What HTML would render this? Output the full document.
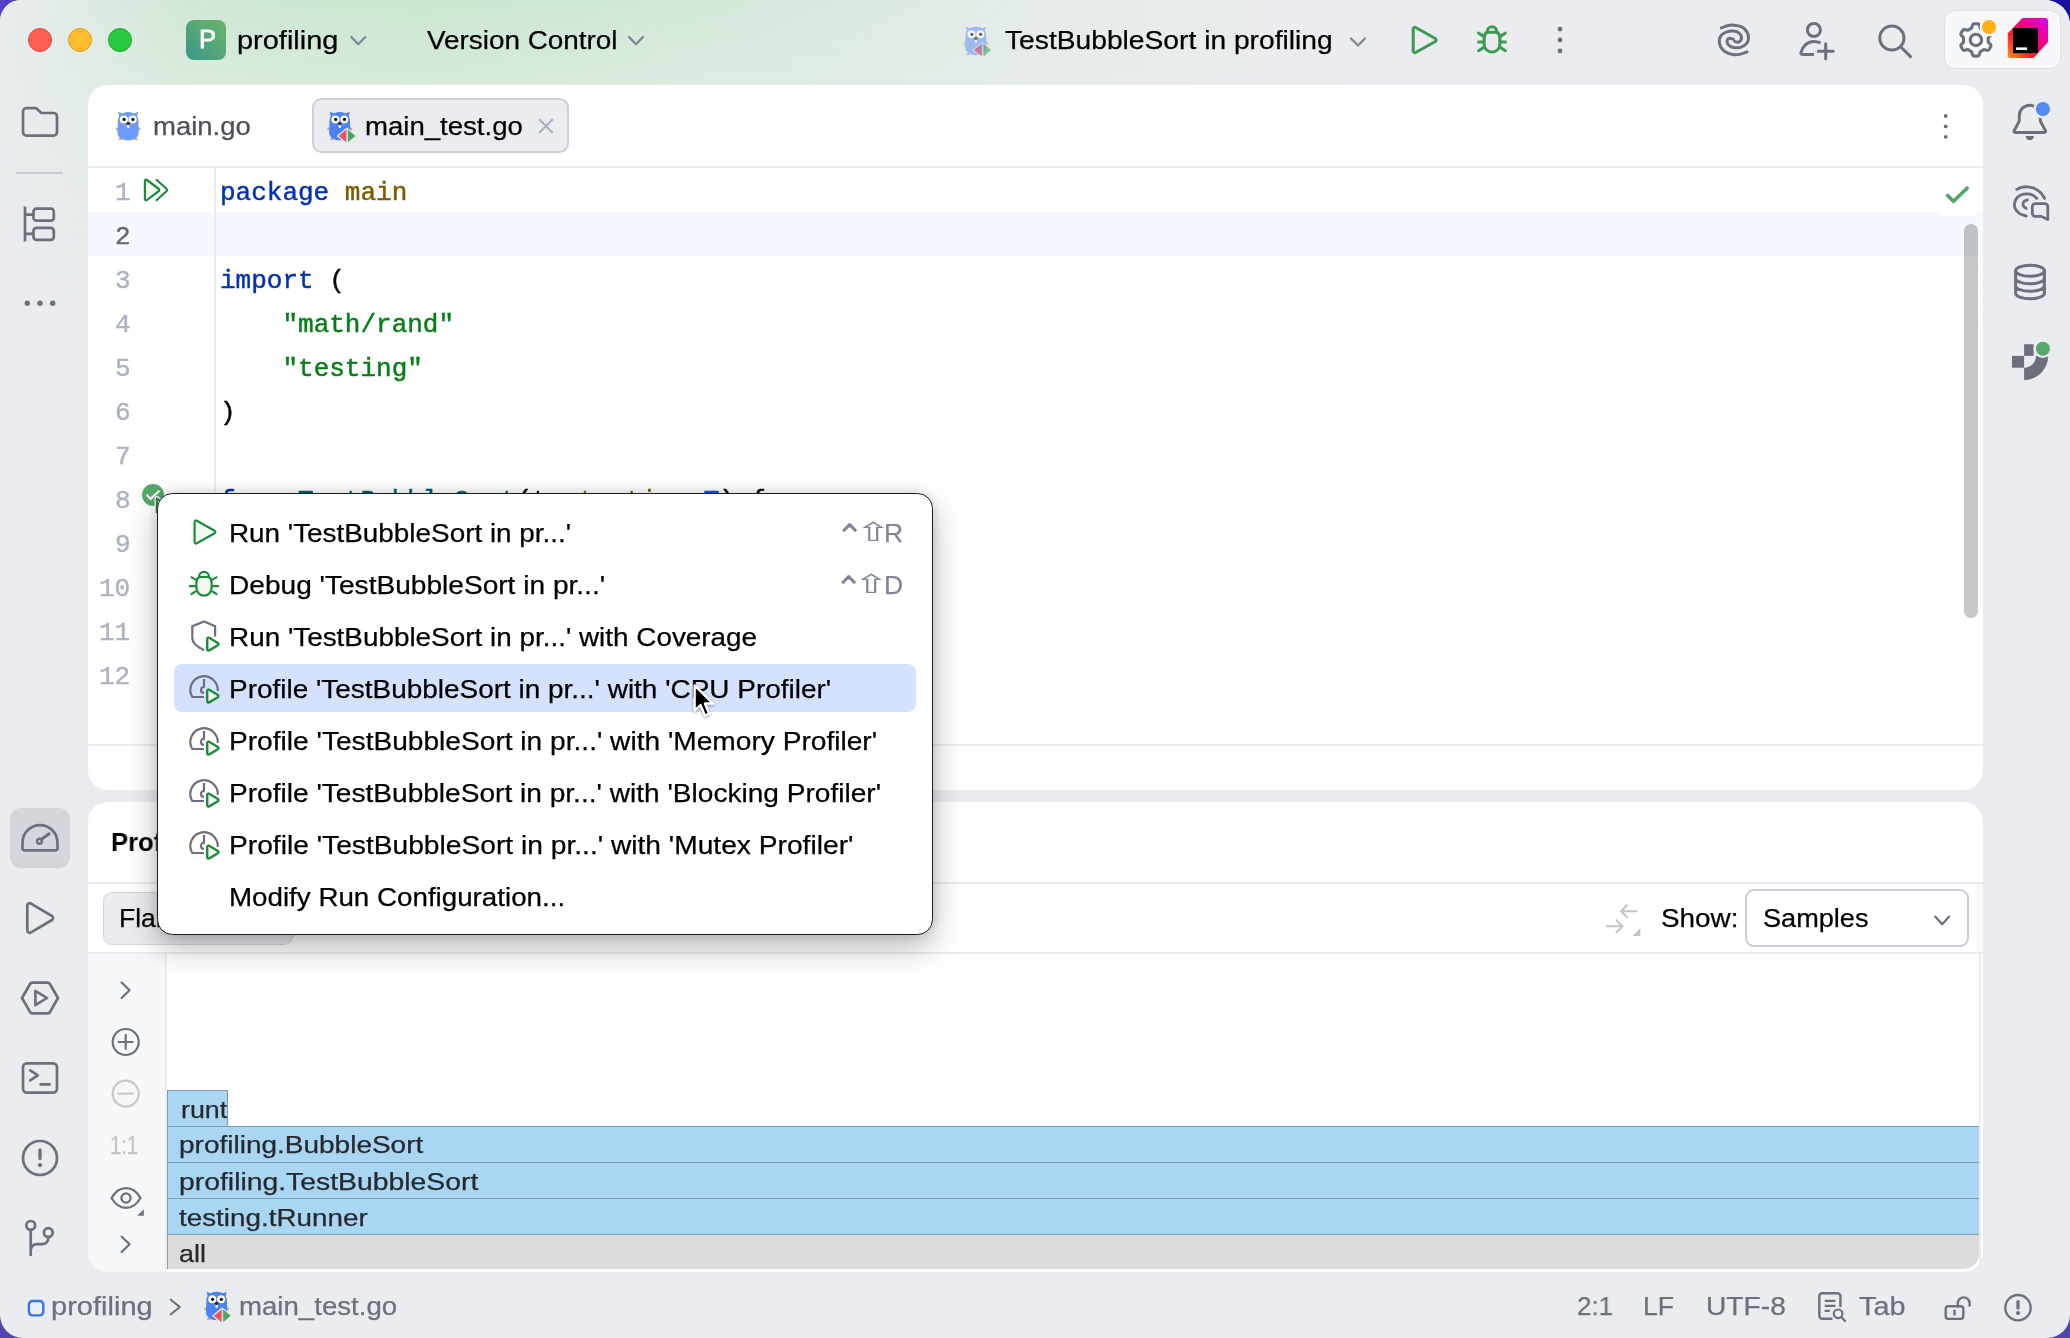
<!DOCTYPE html>
<html lang="en"><head><meta charset="utf-8"><title>profiling – main_test.go</title>
<style>
*{box-sizing:border-box;margin:0;padding:0}
html,body{width:2070px;height:1338px;overflow:hidden}
body{background:#3a2fa8;font-family:"Liberation Sans",sans-serif;position:relative}
#desk{position:absolute;left:0;top:0;width:2070px;height:1338px;
 background:linear-gradient(180deg,rgba(80,70,176,0) 0,rgba(80,70,176,0) 600px,#5046b0 1300px),linear-gradient(90deg,#5145c5 0,#4337b8 60px,#2a20a0 1000px,#180e9c 2070px)}
#win{position:absolute;left:0;top:0;width:2070px;height:1338px;border-radius:21px 25px 23px 23px;background:#ebecf0;overflow:hidden}
#tint{position:absolute;left:0;top:0;width:2070px;height:400px;
 background:linear-gradient(90deg,#e9ecec 0,#e3ece7 60px,#d8ebdc 190px,#d4ead8 420px,#dbece0 720px,#e5ece8 1020px,#eaecee 1250px,#ebecf0 1400px);
 -webkit-mask-image:linear-gradient(180deg,#000 0,#000 70px,rgba(0,0,0,.55) 150px,transparent 330px);mask-image:linear-gradient(180deg,#000 0,#000 70px,rgba(0,0,0,.55) 150px,transparent 330px)}
.abs{position:absolute}
.panel{position:absolute;background:#fff;border-radius:20px;overflow:hidden}
.t{position:absolute;white-space:pre;line-height:1;-webkit-text-stroke:.25px;will-change:transform}
.hl{position:absolute;height:2px;background:#ebecf0}
svg{position:absolute;overflow:visible}
.code{font-family:"Liberation Mono",monospace;font-size:26px;-webkit-text-stroke:.45px}
.kw{color:#0033b3}.str{color:#067d17}.pkg{color:#7a5c00}.fn{color:#00627a}.ty{color:#1750eb}
</style></head>
<body>
<div id="desk"></div>
<div id="win">
<div id="tint"></div>
<div class="abs" style="left:0;top:0;width:1500px;height:70px;background:linear-gradient(180deg,rgba(96,190,120,.075) 0,rgba(96,190,120,.035) 28px,rgba(96,190,120,0) 70px);-webkit-mask-image:linear-gradient(90deg,transparent 40px,#000 260px,#000 600px,transparent 1050px);mask-image:linear-gradient(90deg,transparent 40px,#000 260px,#000 600px,transparent 1050px)"></div>
<div class="abs" style="left:28px;top:28px;width:24px;height:24px;border-radius:50%;background:#ff5f57;border:1px solid #e2463f"></div>
<div class="abs" style="left:68px;top:28px;width:24px;height:24px;border-radius:50%;background:#febc2e;border:1px solid #dea123"></div>
<div class="abs" style="left:108px;top:28px;width:24px;height:24px;border-radius:50%;background:#28c840;border:1px solid #1aab29"></div>
<div class="abs" style="left:186px;top:20px;width:40px;height:40px;border-radius:8px;background:linear-gradient(45deg,#38978a,#6db567)"></div>
<div class="abs" style="left:1944.4px;top:10.4px;width:116.4px;height:58.2px;border-radius:11px;background:#f7f8fa;border:1.3px solid #dfe0e6"></div>
<div class="panel" style="left:87.5px;top:85.2px;width:1895.3px;height:704.8px"></div>
<div class="abs" style="left:87.5px;top:166px;width:1895.3px;height:2px;background:#ebecf0"></div>
<div class="abs" style="left:87.5px;top:212px;width:1895.3px;height:44px;background:#f5f8fe"></div>
<div class="abs" style="left:214.2px;top:168px;width:1.8px;height:576.5px;background:#ebecf0"></div>
<div class="abs" style="left:87.5px;top:744.3px;width:1895.3px;height:1.8px;background:#ebecf0"></div>
<div class="abs" style="left:1935px;top:168px;width:45px;height:47.5px;background:#fff;border-radius:0 0 9px 9px"></div>
<div class="abs" style="left:1964.3px;top:224px;width:13.4px;height:393.7px;background:rgba(0,0,0,.215);border-radius:6.7px"></div>
<div class="abs" style="left:312.2px;top:98.4px;width:257px;height:54.8px;border-radius:9.5px;background:#ebecf0;border:2px solid #cdd0d9"></div>
<div class="panel" style="left:87.5px;top:801.8px;width:1895.3px;height:470.4px"></div>
<div class="abs" style="left:10px;top:808.3px;width:60px;height:59.6px;border-radius:11px;background:#d4d6dc"></div>
<div class="abs" style="left:87.5px;top:881.8px;width:1895.3px;height:1.8px;background:#ebecf0"></div>
<div class="abs" style="left:87.5px;top:952.2px;width:1895.3px;height:2px;background:#ebecf0"></div>
<div class="abs" style="left:1976px;top:883.6px;width:6.8px;height:68.6px;background:#f7f8fa"></div>
<div class="abs" style="left:87.5px;top:954.2px;width:77.5px;height:318px;background:#f7f8fa;border-radius:0 0 0 20px"></div>
<div class="abs" style="left:165px;top:954.2px;width:2px;height:318px;background:#ebecf0"></div>
<div class="abs" style="left:1979.4px;top:954.2px;width:1.2px;height:312px;background:#ebecf0"></div>
<div class="abs" style="left:102.7px;top:892.4px;width:190.6px;height:52.8px;border-radius:9px;background:#ebecf0;border:1.6px solid #d3d5db"></div>
<div class="abs" style="left:1745px;top:888.6px;width:224.4px;height:58.6px;border-radius:9px;background:#fff;border:2px solid #c9ccd6"></div>
<div class="abs" style="left:167.3px;top:1090.3px;width:61px;height:37px;background:#a9d6f2;border:1px solid #7f9db3"></div>
<div class="abs" style="left:167.3px;top:1126.3px;width:1811.9px;height:37px;background:#a9d6f2;border:1px solid #7f9db3;border-right:0"></div>
<div class="abs" style="left:167.3px;top:1162.3px;width:1811.9px;height:37px;background:#a9d6f2;border:1px solid #7f9db3;border-right:0"></div>
<div class="abs" style="left:167.3px;top:1198.3px;width:1811.9px;height:37px;background:#a9d6f2;border:1px solid #7f9db3;border-right:0"></div>
<div class="abs" style="left:167.3px;top:1234.3px;width:1811.9px;height:34.6px;background:#dcdcdc;border-top:1px solid #7f9db3;border-left:1px solid #9a9a9a;border-radius:0 0 15px 0"></div>
<div class="abs" style="left:16px;top:171.8px;width:47.4px;height:1.8px;background:#c9ccd6"></div>
<svg width="2070" height="1338" viewBox="0 0 2070 1338" style="left:0;top:0">
<g transform="translate(40,122)" ><path d="M-17 -10.4a3.4 3.4 0 0 1 3.4-3.4h9a2 2 0 0 1 1.35.52l4.1 3.76a2 2 0 0 0 1.35.52h11.4a3.4 3.4 0 0 1 3.4 3.4v15.8a3.4 3.4 0 0 1-3.4 3.4h-27.2a3.4 3.4 0 0 1-3.4-3.4z" fill="none" stroke="#6c707e" stroke-width="2.7" stroke-linecap="round" stroke-linejoin="round"/></g>
<g transform="translate(40,224)" ><path d="M-15 -17.5v35M-15 -9.3h8.5M-15 9.8h8.5" fill="none" stroke="#6c707e" stroke-width="2.7" stroke-linecap="butt" stroke-linejoin="round"/><rect x="-6.5" y="-15.3" width="20.3" height="12" rx="3" fill="none" stroke="#6c707e" stroke-width="2.7" stroke-linecap="round" stroke-linejoin="round"/><rect x="-6.5" y="3.9" width="20.3" height="12" rx="3" fill="none" stroke="#6c707e" stroke-width="2.7" stroke-linecap="round" stroke-linejoin="round"/></g>
<g transform="translate(40,303.3)" ><circle cx="-12.7" cy="0" r="2.7" fill="#6c707e"/><circle cx="0" cy="0" r="2.7" fill="#6c707e"/><circle cx="12.7" cy="0" r="2.7" fill="#6c707e"/></g>
<g transform="translate(40,838)" ><path d="M-14.900 12.400h29.800a2.600 2.600 0 0 0 2.600-2.600v-5.100a17.500 17.500 0 0 0-35 0v5.100a2.600 2.600 0 0 0 2.600 2.600z" fill="none" stroke="#6c707e" stroke-width="2.7" stroke-linecap="round" stroke-linejoin="round"/><circle cx="-0.500" cy="3.200" r="2.500" fill="none" stroke="#6c707e" stroke-width="2.4" stroke-linecap="round" stroke-linejoin="round"/><path d="M1.500 1.300l7.600-5.500" fill="none" stroke="#6c707e" stroke-width="3" stroke-linecap="round" stroke-linejoin="round"/></g>
<g transform="translate(40,918)" ><path d="M-12.7 -12.4v24.8a2.4 2.4 0 0 0 3.7 2l21-12.4a2.4 2.4 0 0 0 0-4l-21-12.4a2.4 2.4 0 0 0-3.7 2z" fill="none" stroke="#6c707e" stroke-width="2.7" stroke-linecap="round" stroke-linejoin="round"/></g>
<g transform="translate(40,998)" ><path d="M-18 0l8.2-14.2a2.4 2.4 0 0 1 2.1-1.2h15.4a2.4 2.4 0 0 1 2.1 1.2l8.2 14.2-8.2 14.2a2.4 2.4 0 0 1-2.1 1.2h-15.4a2.4 2.4 0 0 1-2.1-1.2z" fill="none" stroke="#6c707e" stroke-width="2.7" stroke-linecap="round" stroke-linejoin="round"/><path d="M-4.6 -7.2v14.4l11.6-7.2z" fill="none" stroke="#6c707e" stroke-width="2.6" stroke-linecap="round" stroke-linejoin="round"/></g>
<g transform="translate(40,1078)" ><rect x="-17" y="-14.6" width="34" height="29.2" rx="4" fill="none" stroke="#6c707e" stroke-width="2.7" stroke-linecap="round" stroke-linejoin="round"/><path d="M-9.8 -7.6l7.6 5-7.6 5M0.6 6.4h9" fill="none" stroke="#6c707e" stroke-width="2.6" stroke-linecap="round" stroke-linejoin="round"/></g>
<g transform="translate(40,1158)" ><circle cx="0" cy="0" r="17" fill="none" stroke="#6c707e" stroke-width="2.7" stroke-linecap="round" stroke-linejoin="round"/><path d="M0 -8.0v8.5" fill="none" stroke="#6c707e" stroke-width="3.3" stroke-linecap="round" stroke-linejoin="round"/><circle cx="0" cy="7.1" r="2.100" fill="#6c707e"/></g>
<g transform="translate(40,1238)" ><circle cx="-9.3" cy="-12.6" r="4.4" fill="none" stroke="#6c707e" stroke-width="2.7" stroke-linecap="round" stroke-linejoin="round"/><circle cx="8.3" cy="-5.4" r="4.4" fill="none" stroke="#6c707e" stroke-width="2.7" stroke-linecap="round" stroke-linejoin="round"/><path d="M-9.3 -8.2v25.2M8.3 -1v1.2a6 6 0 0 1-6 6h-5.6a6 6 0 0 0-6 6" fill="none" stroke="#6c707e" stroke-width="2.7" stroke-linecap="round" stroke-linejoin="round"/></g>
<g transform="translate(358.3,40.6)" ><path d="M-7.0 -3.6l7.0 7.2 7.0 -7.2" fill="none" stroke="#818594" stroke-width="2.2" stroke-linecap="round" stroke-linejoin="round"/></g>
<g transform="translate(636,40.6)" ><path d="M-7.0 -3.6l7.0 7.2 7.0 -7.2" fill="none" stroke="#818594" stroke-width="2.2" stroke-linecap="round" stroke-linejoin="round"/></g>
<g transform="translate(1358,42)" ><path d="M-7.0 -3.6l7.0 7.2 7.0 -7.2" fill="none" stroke="#818594" stroke-width="2.2" stroke-linecap="round" stroke-linejoin="round"/></g>
<g transform="translate(963.5,26.5) scale(1.0)" opacity="0.62"><ellipse cx="1.8" cy="17.3" rx="2" ry="1.7" fill="#d6ab93"/><ellipse cx="22.900" cy="17.3" rx="2" ry="1.7" fill="#d6ab93"/><ellipse cx="4.5" cy="27.400" rx="1.9" ry="1.3" fill="#d6ab93"/><ellipse cx="20.200" cy="27.400" rx="1.9" ry="1.3" fill="#d6ab93"/><path d="M2.300 0.200l4.200 1.800-3 3.200zM22.400 0.200l-4.200 1.800 3 3.200z" fill="#6f9cf8"/><path d="M12.350 0.300c6.300 0 10.300 3.600 10.300 9.200 0 3.800.3 7.200.3 10.800 0 5.600-4.500 8.400-10.600 8.400s-10.600-2.800-10.600-8.400c0-3.600.3-7 .3-10.800 0-5.600 4-9.200 10.300-9.200z" fill="#6f9cf8"/><circle cx="8" cy="7.800" r="4" fill="#fff"/><circle cx="16.800" cy="7.800" r="4" fill="#fff"/><circle cx="8.300" cy="7.800" r="1.600" fill="#111"/><circle cx="17.100" cy="7.800" r="1.600" fill="#111"/><rect x="11.200" y="13" width="2.500" height="3.300" rx=".6" fill="#f3e9dc"/><ellipse cx="12.400" cy="12" rx="2" ry="1.400" fill="#2b2b2b"/></g>
<g opacity=".6"><g transform="translate(974,44)"><path d="M-1.800 6.100L8.400 -2.300V14.500z M18.900 6.100L8.700 -2.300V14.500z" fill="#e6ece9"/><path d="M0 6.100L7.900 -.3V12.500z" fill="#e55765"/><path d="M17.100 6.100L9.500 -.3V12.500z" fill="#4da75c"/></g></g>
<g transform="translate(1425,40)" ><path d="M-11.8 -11V11a1.7 1.7 0 0 0 2.5 1.5l19.6-11a1.7 1.7 0 0 0 0-3l-19.6-11a1.7 1.7 0 0 0-2.5 1.5z" fill="none" stroke="#3a9a50" stroke-width="3" stroke-linecap="round" stroke-linejoin="round"/></g>
<g transform="translate(1492,40)" ><path d="M-4.700 -7.800h9.400C6.800 -6.700 7.850 -4.300 7.850 -1.600V4.150A7.850 7.850 0 0 1 -7.850 4.150V-1.600C-7.850 -4.300 -6.800 -6.700 -4.700 -7.800z" fill="none" stroke="#3a9a50" stroke-width="3" stroke-linecap="round" stroke-linejoin="round"/><path d="M-4.900 -7.800A4.900 5.500 0 0 1 4.900 -7.800" fill="none" stroke="#3a9a50" stroke-width="3" stroke-linecap="round" stroke-linejoin="round"/><path d="M-8.600 1.900H-13.400M8.600 1.900H13.400M-8.500 -3.900L-13.300 -6.800M8.500 -3.900L13.300 -6.800M-8.500 7.600L-13.300 10.700M8.500 7.600L13.300 10.700" fill="none" stroke="#3a9a50" stroke-width="3" stroke-linecap="round" stroke-linejoin="round"/></g>
<g transform="translate(1560,40)" ><circle cx="0" cy="-10.9" r="2.4" fill="#6c707e"/><circle cx="0" cy="0" r="2.4" fill="#6c707e"/><circle cx="0" cy="10.9" r="2.4" fill="#6c707e"/></g>
<g transform="translate(1733.9,40)" ><path d="M-12.53 -12.01C-11.58 -12.39 -8.88 -13.84 -6.79 -14.31C-4.70 -14.78 -2.44 -15.04 0.00 -14.83C2.44 -14.62 5.62 -14.22 7.83 -13.06C10.04 -11.89 12.13 -9.75 13.26 -7.83C14.40 -5.92 14.74 -3.48 14.62 -1.57C14.50 0.35 13.66 2.26 12.53 3.66C11.40 5.05 9.66 6.09 7.83 6.79C6.01 7.49 3.57 7.96 1.57 7.83C-0.44 7.71 -2.79 7.02 -4.18 6.06C-5.57 5.10 -6.67 3.36 -6.79 2.09C-6.91 0.82 -5.95 -1.08 -4.91 -1.57C-3.86 -2.05 -1.25 -0.96 -0.52 -0.84M13.06 12.01C12.01 12.36 9.05 13.66 6.79 14.10C4.53 14.54 2.00 14.97 -0.52 14.62C-3.05 14.27 -6.23 13.32 -8.36 12.01C-10.48 10.71 -12.22 8.79 -13.26 6.79C-14.31 4.79 -14.74 1.91 -14.62 0.00C-14.50 -1.91 -13.66 -3.39 -12.53 -4.70C-11.40 -6.01 -9.84 -7.14 -7.83 -7.83C-5.83 -8.53 -2.70 -9.05 -0.52 -8.88C1.65 -8.70 3.86 -7.92 5.22 -6.79C6.58 -5.66 7.71 -3.57 7.62 -2.09C7.54 -0.61 5.85 1.51 4.70 2.09C3.55 2.66 1.39 1.48 0.73 1.36" fill="none" stroke="#6c707e" stroke-width="3.0" stroke-linecap="round" stroke-linejoin="round"/></g>
<g transform="translate(1816,41)" ><circle cx="-2.1" cy="-11" r="6.5" fill="none" stroke="#6c707e" stroke-width="3" stroke-linecap="round" stroke-linejoin="round"/><path d="M-2.1 13.4h-11.6a1.4 1.4 0 0 1-1.4-1.8c1.6-6.6 6.6-11.2 13-11.2 2.4 0 4.6.5 6.6 1.5" fill="none" stroke="#6c707e" stroke-width="3" stroke-linecap="butt" stroke-linejoin="round"/><path d="M2.2 10.3h15M9.7 2.8v15" fill="none" stroke="#6c707e" stroke-width="3" stroke-linecap="round" stroke-linejoin="round"/></g>
<g transform="translate(1894.7,40.7)" ><circle cx="-2.8" cy="-2.7" r="12.1" fill="none" stroke="#6c707e" stroke-width="3" stroke-linecap="round" stroke-linejoin="round"/><path d="M6.2 6.3l9.6 9.6" fill="none" stroke="#6c707e" stroke-width="3" stroke-linecap="round" stroke-linejoin="round"/></g>
<g transform="translate(1975.9,39.9)" ><path d="M12.40 0.00L12.40 0.32L12.38 0.65L12.36 0.97L12.33 1.30L12.30 1.62L12.35 1.96L12.53 2.32L12.85 2.73L13.30 3.19L13.81 3.70L14.30 4.24L14.70 4.78L14.95 5.29L15.03 5.77L14.96 6.20L14.80 6.59L14.62 6.97L14.43 7.35L14.24 7.73L14.03 8.10L13.81 8.46L13.59 8.82L13.35 9.18L13.11 9.52L12.85 9.86L12.51 10.13L12.06 10.30L11.49 10.34L10.82 10.27L10.11 10.11L9.42 9.92L8.79 9.77L8.27 9.69L7.87 9.71L7.55 9.84L7.29 10.03L7.02 10.22L6.75 10.40L6.48 10.57L6.20 10.74L5.92 10.90L5.63 11.05L5.34 11.19L5.04 11.33L4.75 11.46L4.48 11.67L4.25 12.01L4.06 12.50L3.89 13.12L3.70 13.81L3.48 14.51L3.21 15.12L2.89 15.59L2.52 15.90L2.11 16.06L1.69 16.11L1.27 16.15L0.85 16.18L0.42 16.19L0.00 16.20L-0.42 16.19L-0.85 16.18L-1.27 16.15L-1.69 16.11L-2.11 16.06L-2.52 15.90L-2.89 15.59L-3.21 15.12L-3.48 14.51L-3.70 13.81L-3.89 13.12L-4.06 12.50L-4.25 12.01L-4.48 11.67L-4.75 11.46L-5.04 11.33L-5.34 11.19L-5.63 11.05L-5.92 10.90L-6.20 10.74L-6.48 10.57L-6.75 10.40L-7.02 10.22L-7.29 10.03L-7.55 9.84L-7.87 9.71L-8.27 9.69L-8.79 9.77L-9.42 9.92L-10.11 10.11L-10.82 10.27L-11.49 10.34L-12.06 10.30L-12.51 10.13L-12.85 9.86L-13.11 9.52L-13.35 9.18L-13.59 8.82L-13.81 8.46L-14.03 8.10L-14.24 7.73L-14.43 7.35L-14.62 6.97L-14.80 6.59L-14.96 6.20L-15.03 5.77L-14.95 5.29L-14.70 4.78L-14.30 4.24L-13.81 3.70L-13.30 3.19L-12.85 2.73L-12.53 2.32L-12.35 1.96L-12.30 1.62L-12.33 1.30L-12.36 0.97L-12.38 0.65L-12.40 0.32L-12.40 0.00L-12.40 -0.32L-12.38 -0.65L-12.36 -0.97L-12.33 -1.30L-12.30 -1.62L-12.35 -1.96L-12.53 -2.32L-12.85 -2.73L-13.30 -3.19L-13.81 -3.70L-14.30 -4.24L-14.70 -4.78L-14.95 -5.29L-15.03 -5.77L-14.96 -6.20L-14.80 -6.59L-14.62 -6.97L-14.43 -7.35L-14.24 -7.73L-14.03 -8.10L-13.81 -8.46L-13.59 -8.82L-13.35 -9.18L-13.11 -9.52L-12.85 -9.86L-12.51 -10.13L-12.06 -10.30L-11.49 -10.34L-10.82 -10.27L-10.11 -10.11L-9.42 -9.92L-8.79 -9.77L-8.27 -9.69L-7.87 -9.71L-7.55 -9.84L-7.29 -10.03L-7.02 -10.22L-6.75 -10.40L-6.48 -10.57L-6.20 -10.74L-5.92 -10.90L-5.63 -11.05L-5.34 -11.19L-5.04 -11.33L-4.75 -11.46L-4.48 -11.67L-4.25 -12.01L-4.06 -12.50L-3.89 -13.12L-3.70 -13.81L-3.48 -14.51L-3.21 -15.12L-2.89 -15.59L-2.52 -15.90L-2.11 -16.06L-1.69 -16.11L-1.27 -16.15L-0.85 -16.18L-0.42 -16.19L-0.00 -16.20L0.42 -16.19L0.85 -16.18L1.27 -16.15L1.69 -16.11L2.11 -16.06L2.52 -15.90L2.89 -15.59L3.21 -15.12L3.48 -14.51L3.70 -13.81L3.89 -13.12L4.06 -12.50L4.25 -12.01L4.48 -11.67L4.75 -11.46L5.04 -11.33L5.34 -11.19L5.63 -11.05L5.92 -10.90L6.20 -10.74L6.48 -10.57L6.75 -10.40L7.02 -10.22L7.29 -10.03L7.55 -9.84L7.87 -9.71L8.27 -9.69L8.79 -9.77L9.42 -9.92L10.11 -10.11L10.82 -10.27L11.49 -10.34L12.06 -10.30L12.51 -10.13L12.85 -9.86L13.11 -9.52L13.35 -9.18L13.59 -8.82L13.81 -8.46L14.03 -8.10L14.24 -7.73L14.43 -7.35L14.62 -6.97L14.80 -6.59L14.96 -6.20L15.03 -5.77L14.95 -5.29L14.70 -4.78L14.30 -4.24L13.81 -3.70L13.30 -3.19L12.85 -2.73L12.53 -2.32L12.35 -1.96L12.30 -1.62L12.33 -1.30L12.36 -0.97L12.38 -0.65L12.40 -0.32z" fill="none" stroke="#6c707e" stroke-width="3.1" stroke-linecap="round" stroke-linejoin="round"/><circle cx="0" cy="0" r="5.7" fill="none" stroke="#6c707e" stroke-width="3.1" stroke-linecap="round" stroke-linejoin="round"/></g>
<circle cx="1989" cy="27" r="9.3" fill="#f7f8fa"/><circle cx="1989" cy="27" r="7" fill="#ffaf0f"/>
<defs><linearGradient id="lg1" gradientUnits="userSpaceOnUse" x1="2008" y1="58" x2="2048" y2="18"><stop offset="0" stop-color="#ff9419"/><stop offset=".28" stop-color="#ff2a22"/><stop offset=".55" stop-color="#f6006c"/><stop offset=".85" stop-color="#e700c4"/><stop offset="1" stop-color="#dc00ff"/></linearGradient></defs><path d="M2023.300 19.400H2044.800a1.700 1.700 0 0 1 1.700 1.700V41.500L2033 56.600H2011a1.700 1.700 0 0 1-1.700-1.700V33.900z" fill="url(#lg1)" stroke="url(#lg1)" stroke-width="3" stroke-linejoin="round"/><rect x="2013" y="28.1" width="25" height="25" fill="#000"/><rect x="2016" y="47.4" width="11" height="2.6" fill="#fff"/>
<g transform="translate(2029.8,122)" ><path d="M-14.7 10.4c-.9 0-1.4-1-.9-1.8l4.6-8.6c.3-.6.5-1.3.5-2v-4.300a10.5 10.5 0 0 1 21 0V-2c0 .7.2 1.400.5 2l4.6 8.600c.5.8 0 1.800-.9 1.800z" fill="none" stroke="#6c707e" stroke-width="3" stroke-linecap="round" stroke-linejoin="round"/><path d="M-4.2 14a4.200 4.200 0 0 0 8.400 0z" fill="#6c707e"/><circle cx="13.1" cy="-12.9" r="9.4" fill="#ebecf0"/><circle cx="13.1" cy="-12.9" r="7.1" fill="#548af7"/></g>
<path d="M2016.80 189.40C2017.58 189.07 2019.82 187.83 2021.50 187.40C2023.18 186.97 2024.82 186.67 2026.90 186.80C2028.98 186.93 2031.73 187.27 2034.00 188.20C2036.27 189.13 2038.73 190.70 2040.50 192.40C2042.27 194.10 2043.92 197.40 2044.60 198.40" fill="none" stroke="#6c707e" stroke-width="2.8" stroke-linecap="round" stroke-linejoin="round"/><path d="M2026.30 216.10C2025.18 215.68 2021.45 214.85 2019.60 213.60C2017.75 212.35 2016.03 210.33 2015.20 208.60C2014.37 206.87 2014.33 204.97 2014.60 203.20C2014.87 201.43 2015.65 199.40 2016.80 198.00C2017.95 196.60 2019.82 195.48 2021.50 194.80C2023.18 194.12 2025.07 193.87 2026.90 193.90C2028.73 193.93 2030.85 194.25 2032.50 195.00C2034.15 195.75 2036.08 197.83 2036.80 198.40" fill="none" stroke="#6c707e" stroke-width="2.8" stroke-linecap="round" stroke-linejoin="round"/><path d="M2026.30 208.30C2025.87 207.98 2024.25 207.15 2023.70 206.40C2023.15 205.65 2022.90 204.65 2023.00 203.80C2023.10 202.95 2023.55 201.95 2024.30 201.30C2025.05 200.65 2026.97 200.13 2027.50 199.90" fill="none" stroke="#6c707e" stroke-width="2.8" stroke-linecap="round" stroke-linejoin="round"/><path d="M2035.300 203.600h9.500a3 3 0 0 1 3 3V219.500l-6.800-3.200h-5.700a3 3 0 0 1-3-3v-6.700a3 3 0 0 1 3-3z" fill="#ebecf0" stroke="#6c707e" stroke-width="2.8" stroke-linecap="round" stroke-linejoin="round"/>
<g transform="translate(2030,282)" ><ellipse cx="0" cy="-11.3" rx="14.4" ry="5.5" fill="none" stroke="#6c707e" stroke-width="3" stroke-linecap="round" stroke-linejoin="round"/><path d="M-14.4 -11.3v22.500M14.4 -11.3v22.500M-14.4 -3.8a14.4 5.5 0 0 0 28.8 0M-14.4 3.700a14.4 5.5 0 0 0 28.8 0M-14.4 11.200a14.4 5.5 0 0 0 28.8 0" fill="none" stroke="#6c707e" stroke-width="3" stroke-linecap="round" stroke-linejoin="round"/></g>
<rect x="2024.1" y="344.2" width="9.500" height="11.700" fill="#6c707e"/><rect x="2012" y="355.9" width="12.100" height="11.800" fill="#6c707e"/><path d="M2048.2 355.9A24.1 24.1 0 0 1 2024.1 380.0V367.7A11.8 11.8 0 0 0 2035.8999999999999 355.9z" fill="#6c707e"/><circle cx="2042.900" cy="348.700" r="9.400" fill="#ebecf0"/><circle cx="2042.900" cy="348.700" r="7" fill="#55a76a"/>
<g transform="translate(115.8,111.6) scale(1.0)" opacity="1.0"><ellipse cx="1.8" cy="17.3" rx="2" ry="1.7" fill="#d6ab93"/><ellipse cx="22.900" cy="17.3" rx="2" ry="1.7" fill="#d6ab93"/><ellipse cx="4.5" cy="27.400" rx="1.9" ry="1.3" fill="#d6ab93"/><ellipse cx="20.200" cy="27.400" rx="1.9" ry="1.3" fill="#d6ab93"/><path d="M2.300 0.200l4.200 1.800-3 3.200zM22.400 0.200l-4.200 1.800 3 3.200z" fill="#6f9cf8"/><path d="M12.350 0.300c6.300 0 10.300 3.600 10.300 9.200 0 3.800.3 7.200.3 10.800 0 5.600-4.500 8.400-10.600 8.400s-10.600-2.800-10.600-8.400c0-3.600.3-7 .3-10.800 0-5.600 4-9.200 10.300-9.200z" fill="#6f9cf8"/><circle cx="8" cy="7.800" r="4" fill="#fff"/><circle cx="16.800" cy="7.800" r="4" fill="#fff"/><circle cx="8.300" cy="7.800" r="1.600" fill="#111"/><circle cx="17.100" cy="7.800" r="1.600" fill="#111"/><rect x="11.200" y="13" width="2.500" height="3.300" rx=".6" fill="#f3e9dc"/><ellipse cx="12.400" cy="12" rx="2" ry="1.400" fill="#2b2b2b"/></g>
<g transform="translate(327.4,111.6) scale(1.0)" opacity="1.0"><ellipse cx="1.8" cy="17.3" rx="2" ry="1.7" fill="#d6ab93"/><ellipse cx="22.900" cy="17.3" rx="2" ry="1.7" fill="#d6ab93"/><ellipse cx="4.5" cy="27.400" rx="1.9" ry="1.3" fill="#d6ab93"/><ellipse cx="20.200" cy="27.400" rx="1.9" ry="1.3" fill="#d6ab93"/><path d="M2.300 0.200l4.200 1.800-3 3.200zM22.400 0.200l-4.200 1.800 3 3.200z" fill="#4a82f7"/><path d="M12.350 0.300c6.300 0 10.300 3.600 10.300 9.200 0 3.800.3 7.200.3 10.800 0 5.600-4.500 8.400-10.600 8.400s-10.600-2.800-10.600-8.400c0-3.600.3-7 .3-10.800 0-5.600 4-9.200 10.300-9.200z" fill="#4a82f7"/><circle cx="8" cy="7.800" r="4" fill="#fff"/><circle cx="16.800" cy="7.800" r="4" fill="#fff"/><circle cx="8.300" cy="7.800" r="1.600" fill="#111"/><circle cx="17.100" cy="7.800" r="1.600" fill="#111"/><rect x="11.200" y="13" width="2.500" height="3.300" rx=".6" fill="#f3e9dc"/><ellipse cx="12.400" cy="12" rx="2" ry="1.400" fill="#2b2b2b"/></g>
<g transform="translate(338.4,129.8)"><path d="M-1.800 6.100L8.400 -2.300V14.500z M18.900 6.100L8.700 -2.300V14.500z" fill="#ebecf0"/><path d="M0 6.100L7.900 -.3V12.500z" fill="#e55765"/><path d="M17.100 6.100L9.500 -.3V12.500z" fill="#4da75c"/></g>
<path d="M539.600 119.800l12.600 12.600M552.200 119.800l-12.600 12.600" fill="none" stroke="#a8adbd" stroke-width="2" stroke-linecap="round" stroke-linejoin="round"/>
<g transform="translate(1945.7,126.4)" ><circle cx="0" cy="-10.4" r="1.9" fill="#6c707e"/><circle cx="0" cy="0" r="1.9" fill="#6c707e"/><circle cx="0" cy="10.4" r="1.9" fill="#6c707e"/></g>
<path d="M144.900 181v18a1.300 1.300 0 0 0 2.100 1l11.900-9a1.300 1.300 0 0 0 0-2l-11.900-9a1.300 1.300 0 0 0-2.100 1z" fill="#f2faf3" stroke="#208a3c" stroke-width="2.2" stroke-linecap="round" stroke-linejoin="round"/><path d="M155.900 179.300l10.600 9.500a1.600 1.600 0 0 1 0 2.400l-10.600 9.500" fill="none" stroke="#208a3c" stroke-width="2.2" stroke-linecap="butt" stroke-linejoin="round"/>
<g transform="translate(153,495)" ><circle cx="0" cy="0" r="11" fill="#55a76a"/><path d="M-6.400 -.3l4 4.200 8.800-8.100" fill="none" stroke="#fff" stroke-width="2.2" stroke-linecap="butt" stroke-linejoin="miter"/><path d="M3.800 3.300v14l9-7z" fill="#fff" stroke="#fff" stroke-width="4.6" stroke-linecap="round" stroke-linejoin="round"/><path d="M3.800 3.300v14l9-7z" fill="#f2faf3" stroke="#208a3c" stroke-width="2" stroke-linecap="round" stroke-linejoin="round"/></g>
<path d="M1946.6 194.5l6.800 6.800 14.800-14.200" fill="none" stroke="#55a76a" stroke-width="3.6" stroke-linecap="butt" stroke-linejoin="miter"/>
<g transform="translate(125.6,990.3)" ><path d="M-4.0 -7.75l8 7.75 -8 7.75" fill="none" stroke="#6c707e" stroke-width="2.2" stroke-linecap="round" stroke-linejoin="round"/></g>
<g transform="translate(125.7,1042)" ><circle cx="0" cy="0" r="13" fill="none" stroke="#6c707e" stroke-width="2.2" stroke-linecap="round" stroke-linejoin="round"/><path d="M-7 0h14M0 -7v14" fill="none" stroke="#6c707e" stroke-width="2.2" stroke-linecap="round" stroke-linejoin="round"/></g>
<g transform="translate(125.7,1093.7)" ><circle cx="0" cy="0" r="13" fill="none" stroke="#c9c9cc" stroke-width="2.2" stroke-linecap="round" stroke-linejoin="round"/><path d="M-7 0h14" fill="none" stroke="#c9c9cc" stroke-width="2.2" stroke-linecap="round" stroke-linejoin="round"/></g>
<g transform="translate(126,1198)" ><path d="M-14.500 0C-10.500 -6.800 -5.500 -9.800 0 -9.800S10.500 -6.800 14.500 0C10.500 6.800 5.500 9.800 0 9.800S-10.500 6.800 -14.500 0z" fill="none" stroke="#6c707e" stroke-width="2.2" stroke-linecap="round" stroke-linejoin="round"/><circle cx="0" cy="0" r="4.600" fill="none" stroke="#6c707e" stroke-width="2.2" stroke-linecap="round" stroke-linejoin="round"/><path d="M17.800 11.200v6.600h-6.600z" fill="#6c707e"/></g>
<g transform="translate(125.6,1244.3)" ><path d="M-4.0 -7.75l8 7.75 -8 7.75" fill="none" stroke="#6c707e" stroke-width="2.2" stroke-linecap="round" stroke-linejoin="round"/></g>
<path d="M1636.500 911.300h-15.500M1627 905.300l-6 6 6 6M1607 926.300h15.500M1616.500 920.300l6 6-6 6" fill="none" stroke="#c3c4c8" stroke-width="2" stroke-linecap="round" stroke-linejoin="round"/><path d="M1640.300 928.300v7.700h-7.700z" fill="#c3c4c8"/>
<g transform="translate(1942.2,920.4)" ><path d="M-7.0 -3.8l7.0 7.6 7.0 -7.6" fill="none" stroke="#6c707e" stroke-width="2.2" stroke-linecap="round" stroke-linejoin="round"/></g>
<rect x="28.9" y="1301.0" width="14.400" height="14.400" rx="3.600" fill="#e7effd" stroke="#3574f0" stroke-width="2.4" stroke-linecap="round" stroke-linejoin="round"/>
<g transform="translate(175.3,1307)" ><path d="M-4.5 -7.25l9 7.25 -9 7.25" fill="none" stroke="#6c707e" stroke-width="2.2" stroke-linecap="round" stroke-linejoin="round"/></g>
<g transform="translate(204.3,1291.5) scale(1.0)" opacity="1.0"><ellipse cx="1.8" cy="17.3" rx="2" ry="1.7" fill="#d6ab93"/><ellipse cx="22.900" cy="17.3" rx="2" ry="1.7" fill="#d6ab93"/><ellipse cx="4.5" cy="27.400" rx="1.9" ry="1.3" fill="#d6ab93"/><ellipse cx="20.200" cy="27.400" rx="1.9" ry="1.3" fill="#d6ab93"/><path d="M2.300 0.200l4.200 1.800-3 3.200zM22.400 0.200l-4.200 1.800 3 3.200z" fill="#4a82f7"/><path d="M12.350 0.300c6.300 0 10.300 3.600 10.300 9.200 0 3.800.3 7.200.3 10.800 0 5.600-4.500 8.400-10.600 8.400s-10.600-2.800-10.600-8.400c0-3.600.3-7 .3-10.800 0-5.600 4-9.200 10.300-9.200z" fill="#4a82f7"/><circle cx="8" cy="7.800" r="4" fill="#fff"/><circle cx="16.800" cy="7.800" r="4" fill="#fff"/><circle cx="8.300" cy="7.800" r="1.600" fill="#111"/><circle cx="17.100" cy="7.800" r="1.600" fill="#111"/><rect x="11.200" y="13" width="2.500" height="3.300" rx=".6" fill="#f3e9dc"/><ellipse cx="12.400" cy="12" rx="2" ry="1.400" fill="#2b2b2b"/></g>
<g transform="translate(213.7,1309.7)"><path d="M-1.800 6.100L8.400 -2.300V14.500z M18.900 6.100L8.700 -2.300V14.500z" fill="#ebecf0"/><path d="M0 6.100L7.900 -.3V12.500z" fill="#e55765"/><path d="M17.100 6.100L9.500 -.3V12.500z" fill="#4da75c"/></g>
<g transform="translate(1817.7,1292)"><path d="M22.700 14V4.300a3 3 0 0 0-3-3H4.600a3 3 0 0 0-3 3v19.500a3 3 0 0 0 3 3h9.200" fill="none" stroke="#6c707e" stroke-width="2.4" stroke-linecap="round" stroke-linejoin="round"/><path d="M7 8.800h10.800M7 13.800h10.800M7 18.800h5.200" fill="none" stroke="#6c707e" stroke-width="2.2" stroke-linecap="butt" stroke-linejoin="round"/><circle cx="20.400" cy="21.800" r="4.300" fill="none" stroke="#6c707e" stroke-width="2.2" stroke-linecap="round" stroke-linejoin="round"/><path d="M23.700 25.200l3.700 3.800" fill="none" stroke="#6c707e" stroke-width="2.2" stroke-linecap="round" stroke-linejoin="round"/></g>
<g transform="translate(1944.5,1296.3)"><rect x="1.200" y="10" width="17.600" height="12.600" rx="2.600" fill="none" stroke="#6c707e" stroke-width="2.4" stroke-linecap="round" stroke-linejoin="round"/><path d="M10 14.500v3.600" fill="none" stroke="#6c707e" stroke-width="2.4" stroke-linecap="round" stroke-linejoin="round"/><path d="M13.300 10V7a5.900 5.900 0 0 1 11.800 0v2.200" fill="none" stroke="#6c707e" stroke-width="2.4" stroke-linecap="round" stroke-linejoin="round"/></g>
<g transform="translate(2018,1307.7)" ><circle cx="0" cy="0" r="12.7" fill="none" stroke="#6c707e" stroke-width="2.3" stroke-linecap="round" stroke-linejoin="round"/><path d="M0 -6.0v6.3" fill="none" stroke="#6c707e" stroke-width="3.3" stroke-linecap="round" stroke-linejoin="round"/><circle cx="0" cy="5.3" r="2.100" fill="#6c707e"/></g>
</svg>
<div class="t" id="tP" style="left:198.6px;top:27.2px;font-size:25.5px;color:#fff;-webkit-text-stroke:.8px;">P</div>
<div class="t" id="tproj" style="left:236.9px;top:26.8px;font-size:26.5px;color:#000;transform:scaleX(1.0925);transform-origin:0 0;">profiling</div>
<div class="t" id="tvc" style="left:426.5px;top:26.8px;font-size:26.5px;color:#000;transform:scaleX(1.0514);transform-origin:0 0;">Version Control</div>
<div class="t" id="trun" style="left:1005.0px;top:26.8px;font-size:26.5px;color:#000;transform:scaleX(1.0644);transform-origin:0 0;">TestBubbleSort in profiling</div>
<div class="t" id="tab1" style="left:153.2px;top:112.8px;font-size:26.5px;color:#4f5056;transform:scaleX(1.0373);transform-origin:0 0;">main.go</div>
<div class="t" id="tab2" style="left:364.9px;top:112.8px;font-size:26.5px;color:#000;transform:scaleX(1.0400);transform-origin:0 0;">main_test.go</div>
<div class="t code" style="right:1939.7px;top:180.1px;color:#aeb3c2">1</div>
<div class="t code" style="left:219.6px;top:180.1px;color:#080808"><span class="kw">package</span> <span class="pkg">main</span></div>
<div class="t code" style="right:1939.7px;top:224.1px;color:#636778">2</div>
<div class="t code" style="right:1939.7px;top:268.1px;color:#aeb3c2">3</div>
<div class="t code" style="left:219.6px;top:268.1px;color:#080808"><span class="kw">import</span> (</div>
<div class="t code" style="right:1939.7px;top:312.1px;color:#aeb3c2">4</div>
<div class="t code" style="left:219.6px;top:312.1px;color:#080808">    <span class="str">"math/rand"</span></div>
<div class="t code" style="right:1939.7px;top:356.1px;color:#aeb3c2">5</div>
<div class="t code" style="left:219.6px;top:356.1px;color:#080808">    <span class="str">"testing"</span></div>
<div class="t code" style="right:1939.7px;top:400.1px;color:#aeb3c2">6</div>
<div class="t code" style="left:219.6px;top:400.1px;color:#080808">)</div>
<div class="t code" style="right:1939.7px;top:444.1px;color:#aeb3c2">7</div>
<div class="t code" style="right:1939.7px;top:488.1px;color:#aeb3c2">8</div>
<div class="t code" style="left:219.6px;top:488.1px;color:#080808"><span class="kw">func</span> <span class="fn">TestBubbleSort</span>(t <span style="position:relative;top:7px">*</span><span class="pkg">testing</span>.<span class="ty">T</span>) {</div>
<div class="t code" style="right:1939.7px;top:532.1px;color:#aeb3c2">9</div>
<div class="t code" style="right:1939.7px;top:576.1px;color:#aeb3c2">10</div>
<div class="t code" style="right:1939.7px;top:620.1px;color:#aeb3c2">11</div>
<div class="t code" style="right:1939.7px;top:664.1px;color:#aeb3c2">12</div>
<div class="t" id="pfT" style="left:111.3px;top:828.8px;font-size:26.5px;color:#000;font-weight:700;-webkit-text-stroke:0;transform:scaleX(.965);transform-origin:0 0;">Profiler</div>
<div class="t" id="pfFla" style="left:118.9px;top:904.8px;font-size:26.5px;color:#000;">Flame Graph</div>
<div class="t" id="pfShow" style="left:1660.9px;top:904.8px;font-size:26.5px;color:#000;transform:scaleX(1.0508);transform-origin:0 0;">Show:</div>
<div class="t" id="pfSam" style="left:1763.2px;top:904.8px;font-size:26.5px;color:#000;transform:scaleX(1.0232);transform-origin:0 0;">Samples</div>
<div class="t" id="pf11" style="left:110.2px;top:1131.8px;font-size:26.5px;color:#c4c4c4;transform:scaleX(0.7627);transform-origin:0 0;">1:1</div>
<div class="t" id="f1" style="left:179.3px;top:1133.2px;font-size:24.6px;color:#27282e;transform:scaleX(1.1381);transform-origin:0 0;">profiling.BubbleSort</div>
<div class="t" id="f2" style="left:179.3px;top:1170.2px;font-size:24.6px;color:#27282e;transform:scaleX(1.1523);transform-origin:0 0;">profiling.TestBubbleSort</div>
<div class="t" id="f3" style="left:179.3px;top:1206.2px;font-size:24.6px;color:#27282e;transform:scaleX(1.1313);transform-origin:0 0;">testing.tRunner</div>
<div class="t" id="f4" style="left:179.3px;top:1242.2px;font-size:24.6px;color:#27282e;transform:scaleX(1.0971);transform-origin:0 0;">all</div>
<div class="t" id="s1" style="left:50.9px;top:1292.8px;font-size:26.5px;color:#6c707e;transform:scaleX(1.0968);transform-origin:0 0;">profiling</div>
<div class="t" id="s2" style="left:238.9px;top:1292.8px;font-size:26.5px;color:#6c707e;transform:scaleX(1.0420);transform-origin:0 0;">main_test.go</div>
<div class="t" id="s3" style="left:1577.2px;top:1292.8px;font-size:26.5px;color:#6c707e;transform:scaleX(0.9798);transform-origin:0 0;">2:1</div>
<div class="t" id="s4" style="left:1643.2px;top:1292.8px;font-size:26.5px;color:#6c707e;transform:scaleX(1.0053);transform-origin:0 0;">LF</div>
<div class="t" id="s5" style="left:1705.5px;top:1292.8px;font-size:26.5px;color:#6c707e;transform:scaleX(1.0629);transform-origin:0 0;">UTF-8</div>
<div class="t" id="s6" style="left:1858.8px;top:1292.8px;font-size:26.5px;color:#6c707e;transform:scaleX(1.0881);transform-origin:0 0;">Tab</div>
<div class="abs" style="left:168.3px;top:1091.3px;width:59.2px;height:35px;overflow:hidden"><div class="t" style="left:12.300px;top:6.900px;font-size:24.6px;color:#27282e;transform:scaleX(1.09);transform-origin:0 0">runtime.main</div></div>
<div class="abs" style="left:157px;top:492.8px;width:776px;height:441.8px;border-radius:15.5px;background:#fff;border:1.3px solid #1f1f1f;box-shadow:0 13px 32px rgba(0,0,0,.27),0 0 12px rgba(0,0,0,.15)"></div>
<div class="abs" style="left:174px;top:664.3px;width:742px;height:47.6px;border-radius:8px;background:#d4e2ff"></div>
<svg width="2070" height="1338" viewBox="0 0 2070 1338" style="left:0;top:0">
<g transform="translate(205,532)" ><path d="M-10.400 -10v20a1.500 1.500 0 0 0 2.300 1.300l17.700-10a1.500 1.500 0 0 0 0-2.600l-17.700-10a1.500 1.500 0 0 0-2.300 1.300z" fill="#f2faf3" stroke="#208a3c" stroke-width="2.2" stroke-linecap="round" stroke-linejoin="round"/></g>
<g transform="translate(204,584.3) scale(1.0)"><path d="M-4.6 -7.3h9.2C6.6 -6.3 7.6 -4 7.6 -1.5V3.7A7.6 7.6 0 0 1 -7.6 3.7V-1.5C-7.6 -4 -6.6 -6.3 -4.6 -7.3z" fill="#f2faf3" stroke="#208a3c" stroke-width="2.2" stroke-linecap="butt" stroke-linejoin="round"/><path d="M-4.9 -7.3A4.9 5.2 0 0 1 4.9 -7.3" fill="none" stroke="#208a3c" stroke-width="2.2" stroke-linecap="butt" stroke-linejoin="round"/><path d="M-8 1.8H-15M8 1.8H15M-8 -4.4L-13.2 -7.4M8 -4.4L13.2 -7.4M-8 6.8L-13.2 10.2M8 6.8L13.2 10.2" fill="none" stroke="#208a3c" stroke-width="2.2" stroke-linecap="butt" stroke-linejoin="round"/></g>
<g transform="translate(204,636.7)" ><path d="M0 13.500C-6 10.500 -11.700 7 -11.700 1.500V-10.400L0 -15.200 11.100 -10.400V-.3" fill="none" stroke="#6c707e" stroke-width="2.2" stroke-linecap="butt" stroke-linejoin="miter"/></g><g transform="translate(204,636.7)" ><path d="M3.200 2.200v10.400a1.300 1.300 0 0 0 2 1.100l8.700-5.200a1.300 1.300 0 0 0 0-2.200l-8.700-5.200a1.300 1.300 0 0 0-2 1.100z" fill="#f2faf3" stroke="#208a3c" stroke-width="2.4" stroke-linecap="round" stroke-linejoin="round"/></g>
<g transform="translate(204,688.7)" ><path d="M0 8.300H-11.700A13.700 13.700 0 1 1 13.700 2.200" fill="none" stroke="#6c707e" stroke-width="2.2" stroke-linecap="butt" stroke-linejoin="round"/><path d="M0 -9.700V-1.800A3 3 0 0 0 0 4.200" fill="none" stroke="#6c707e" stroke-width="2.2" stroke-linecap="butt" stroke-linejoin="round"/></g><g transform="translate(204,688.7)" ><path d="M3.200 2.200v10.400a1.300 1.300 0 0 0 2 1.100l8.700-5.200a1.300 1.300 0 0 0 0-2.200l-8.700-5.200a1.300 1.300 0 0 0-2 1.100z" fill="#f2faf3" stroke="#208a3c" stroke-width="2.4" stroke-linecap="round" stroke-linejoin="round"/></g>
<g transform="translate(204,740.7)" ><path d="M0 8.300H-11.700A13.700 13.700 0 1 1 13.700 2.200" fill="none" stroke="#6c707e" stroke-width="2.2" stroke-linecap="butt" stroke-linejoin="round"/><path d="M0 -9.700V-1.800A3 3 0 0 0 0 4.200" fill="none" stroke="#6c707e" stroke-width="2.2" stroke-linecap="butt" stroke-linejoin="round"/></g><g transform="translate(204,740.7)" ><path d="M3.200 2.200v10.400a1.300 1.300 0 0 0 2 1.100l8.700-5.200a1.300 1.300 0 0 0 0-2.200l-8.700-5.200a1.300 1.300 0 0 0-2 1.100z" fill="#f2faf3" stroke="#208a3c" stroke-width="2.4" stroke-linecap="round" stroke-linejoin="round"/></g>
<g transform="translate(204,792.7)" ><path d="M0 8.300H-11.700A13.700 13.700 0 1 1 13.700 2.200" fill="none" stroke="#6c707e" stroke-width="2.2" stroke-linecap="butt" stroke-linejoin="round"/><path d="M0 -9.700V-1.800A3 3 0 0 0 0 4.200" fill="none" stroke="#6c707e" stroke-width="2.2" stroke-linecap="butt" stroke-linejoin="round"/></g><g transform="translate(204,792.7)" ><path d="M3.200 2.200v10.400a1.300 1.300 0 0 0 2 1.100l8.700-5.200a1.300 1.300 0 0 0 0-2.200l-8.700-5.200a1.300 1.300 0 0 0-2 1.100z" fill="#f2faf3" stroke="#208a3c" stroke-width="2.4" stroke-linecap="round" stroke-linejoin="round"/></g>
<g transform="translate(204,844.7)" ><path d="M0 8.300H-11.700A13.700 13.700 0 1 1 13.700 2.200" fill="none" stroke="#6c707e" stroke-width="2.2" stroke-linecap="butt" stroke-linejoin="round"/><path d="M0 -9.700V-1.800A3 3 0 0 0 0 4.200" fill="none" stroke="#6c707e" stroke-width="2.2" stroke-linecap="butt" stroke-linejoin="round"/></g><g transform="translate(204,844.7)" ><path d="M3.200 2.200v10.400a1.300 1.300 0 0 0 2 1.100l8.700-5.200a1.300 1.300 0 0 0 0-2.200l-8.700-5.200a1.300 1.300 0 0 0-2 1.100z" fill="#f2faf3" stroke="#208a3c" stroke-width="2.4" stroke-linecap="round" stroke-linejoin="round"/></g>
</svg>
<div class="t" id="m1" style="left:228.9px;top:519.8px;font-size:26.5px;color:#000;transform:scaleX(1.0515);transform-origin:0 0;">Run 'TestBubbleSort in pr...'</div>
<div class="t" id="m2" style="left:228.9px;top:571.8px;font-size:26.5px;color:#000;transform:scaleX(1.0599);transform-origin:0 0;">Debug 'TestBubbleSort in pr...'</div>
<div class="t" id="m3" style="left:228.9px;top:623.8px;font-size:26.5px;color:#000;transform:scaleX(1.0518);transform-origin:0 0;">Run 'TestBubbleSort in pr...' with Coverage</div>
<div class="t" id="m4" style="left:228.9px;top:675.8px;font-size:26.5px;color:#000;transform:scaleX(1.0543);transform-origin:0 0;">Profile 'TestBubbleSort in pr...' with 'CPU Profiler'</div>
<div class="t" id="m5" style="left:228.9px;top:727.8px;font-size:26.5px;color:#000;transform:scaleX(1.0610);transform-origin:0 0;">Profile 'TestBubbleSort in pr...' with 'Memory Profiler'</div>
<div class="t" id="m6" style="left:228.9px;top:779.8px;font-size:26.5px;color:#000;transform:scaleX(1.0598);transform-origin:0 0;">Profile 'TestBubbleSort in pr...' with 'Blocking Profiler'</div>
<div class="t" id="m7" style="left:228.9px;top:831.8px;font-size:26.5px;color:#000;transform:scaleX(1.0632);transform-origin:0 0;">Profile 'TestBubbleSort in pr...' with 'Mutex Profiler'</div>
<div class="t" id="m8" style="left:228.9px;top:883.8px;font-size:26.5px;color:#000;transform:scaleX(1.0467);transform-origin:0 0;">Modify Run Configuration...</div>
<div class="t" style="left:835.4px;top:519.6px;font-size:35px;font-weight:200;color:#818594;font-family:'DejaVu Sans',sans-serif;-webkit-text-stroke:0;">⌃</div>
<div class="t" style="left:855.4px;top:519.4px;font-size:44px;color:#818594;font-family:'DejaVu Sans',sans-serif;-webkit-text-stroke:0;transform:scaleY(.6);transform-origin:0 0">⇧</div>
<div class="t" style="right:1166.6px;top:519.8px;font-size:26.5px;color:#818594">R</div>
<div class="t" style="left:833.6px;top:571.6px;font-size:35px;font-weight:200;color:#818594;font-family:'DejaVu Sans',sans-serif;-webkit-text-stroke:0;">⌃</div>
<div class="t" style="left:853.4px;top:571.4px;font-size:44px;color:#818594;font-family:'DejaVu Sans',sans-serif;-webkit-text-stroke:0;transform:scaleY(.6);transform-origin:0 0">⇧</div>
<div class="t" style="right:1167.0px;top:571.8px;font-size:26.5px;color:#818594">D</div>
<svg width="2070" height="1338" viewBox="0 0 2070 1338" style="left:0;top:0"><g transform="translate(694.6,685.3)" style="filter:drop-shadow(0 1.5px 1.6px rgba(0,0,0,.38))"><path d="M0 0V25.300L5.900 19.700 10.300 30.200 14.600 28.400 10.300 18.200H18.300z" fill="#000" stroke="#fff" stroke-width="2.400" stroke-linejoin="round"/></g></svg>
</div>
</body></html>
